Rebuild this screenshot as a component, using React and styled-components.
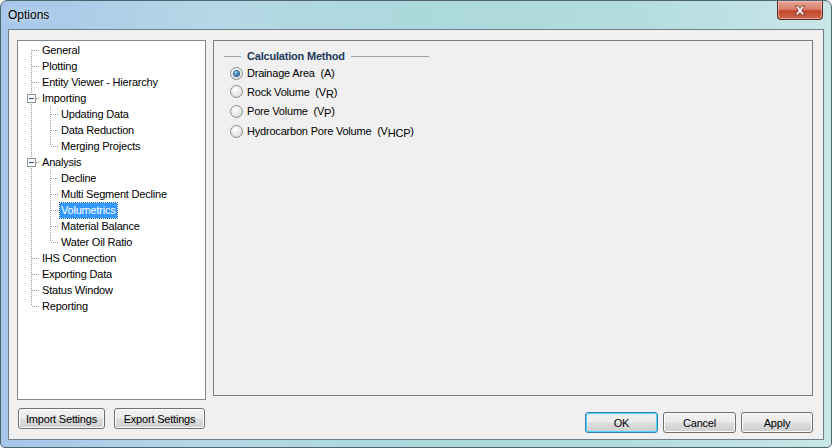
import React from 'react';
import styled, { createGlobalStyle } from 'styled-components';

const GlobalStyle = createGlobalStyle`
    body {
        margin: 0;
        font-family: Tahoma, 'Liberation Sans', sans-serif;
        font-size: 11px;
        letter-spacing: -0.2px;
        color: #000;
    }
`;

const Window = styled.div`
    width: 832px;
    height: 448px;
    box-sizing: border-box;
    display: flex;
    flex-direction: column;
    border: 1px solid #4f6470;
    border-radius: 7px 7px 5px 5px;
    background: linear-gradient(90deg, #a6c6ea 0%, #b5d8e6 25%, #acd9dc 50%, #b2dcde 75%, #c9e6e8 100%);
    overflow: hidden;
`;

const TitleBar = styled.div`
    height: 28px;
    display: flex;
    align-items: flex-start;
    justify-content: space-between;
    padding-left: 7px;
`;

const Title = styled.span`
    margin-top: 7px;
    font-size: 12px;
    letter-spacing: 0;
    color: #000;
    text-shadow: 0 0 6px rgba(255, 255, 255, 0.9);
`;

const CloseButton = styled.div`
    width: 46px;
    height: 19px;
    margin-right: 8px;
    box-sizing: border-box;
    border: 1px solid #5e2b25;
    border-top: none;
    border-radius: 0 0 4px 4px;
    background: linear-gradient(180deg, #e8a598 0%, #d9826e 45%, #c0452c 55%, #d26a4e 100%);
    box-shadow: inset 0 0 0 1px rgba(255, 220, 210, 0.5);
    display: flex;
    align-items: center;
    justify-content: center;
`;

const Client = styled.div`
    flex: 1;
    margin: 0 7px 7px 7px;
    border: 1px solid #6f7f8c;
    background: #f0f0f0;
    display: flex;
    flex-direction: column;
    padding: 10px 10px 0 8px;
`;

const MainRow = styled.div`
    display: flex;
    gap: 7px;
    align-items: flex-start;
`;

const Tree = styled.div`
    width: 189px;
    height: 360px;
    box-sizing: border-box;
    border: 1px solid #828790;
    background: #fff;
    padding-top: 1px;
`;

const TreeRow = styled.div`
    height: 16px;
    display: flex;
    align-items: center;
    position: relative;
    padding-left: ${p => (p.$level === 1 ? 42 : 23)}px;
`;

const Guide = styled.svg`
    position: absolute;
    left: 0;
    top: 0;
    width: 60px;
    height: 16px;
`;

const ItemLabel = styled.span`
    padding: 1px 1px;
    line-height: 13px;
    white-space: nowrap;
    background: ${p => (p.$selected ? '#3399ff' : 'transparent')};
    color: ${p => (p.$selected ? '#fff' : '#000')};
    outline: ${p => (p.$selected ? '1px dotted #1a60b0' : 'none')};
`;

const Panel = styled.div`
    width: 600px;
    height: 356px;
    box-sizing: border-box;
    border: 1px solid #7d7d7d;
    padding: 8px 0 0 10px;
`;

const GroupHeader = styled.div`
    width: 205px;
    display: flex;
    align-items: center;
    gap: 6px;
    height: 14px;
`;

const HeaderLine = styled.div`
    height: 1px;
    background: #a0a0a0;
    width: ${p => p.$w}px;
    flex: ${p => (p.$grow ? 1 : 'none')};
`;

const HeaderText = styled.span`
    font-weight: bold;
    color: #1e395b;
`;

const RadioList = styled.div`
    display: flex;
    flex-direction: column;
    margin-top: 1px;
    padding-left: 6px;
`;

const RadioRow = styled.label`
    display: flex;
    align-items: center;
    height: ${p => p.$h}px;
    gap: 4px;
`;

const RadioDot = styled.span`
    width: 13px;
    height: 13px;
    box-sizing: border-box;
    border-radius: 50%;
    border: 1px solid #8e8f8f;
    background: radial-gradient(circle at 40% 35%, #ffffff 0%, #e6e6e6 55%, #cfcfcf 100%);
    display: flex;
    align-items: center;
    justify-content: center;
    &::after {
        content: '';
        width: 5px;
        height: 5px;
        border-radius: 50%;
        display: ${p => (p.$checked ? 'block' : 'none')};
        background: radial-gradient(circle at 40% 35%, #a4d4f4 0%, #2a6fb5 60%, #174a82 100%);
        box-shadow: 0 0 0 1px #3c6a99;
    }
`;

const RadioText = styled.span`
    white-space: pre;
`;

const Sub = styled.span`
    position: relative;
    top: 2px;
`;

const BottomRow = styled.div`
    display: flex;
    justify-content: space-between;
    align-items: flex-start;
    padding-top: 7px;
`;

const ButtonGroup = styled.div`
    display: flex;
    gap: ${p => p.$gap}px;
    margin-top: ${p => p.$top || 0}px;
    margin-left: ${p => p.$left || 0}px;
`;

const Button = styled.button`
    width: ${p => p.$w}px;
    height: ${p => p.$h}px;
    font-family: Tahoma, 'Liberation Sans', sans-serif;
    font-size: 11px;
    letter-spacing: -0.2px;
    color: #000;
    border: 1px solid ${p => (p.$default ? '#3c7fb1' : '#707070')};
    border-radius: 3px;
    padding: 0;
    background: linear-gradient(180deg, #f2f2f2 0%, #ebebeb 48%, #dddddd 52%, #cfcfcf 100%);
    box-shadow: inset 0 0 0 1px ${p => (p.$default ? '#48d7fb' : '#fcfcfc')};
`;

const treeItems = [
    { label: 'General', level: 0 },
    { label: 'Plotting', level: 0 },
    { label: 'Entity Viewer - Hierarchy', level: 0 },
    { label: 'Importing', level: 0, expander: true },
    { label: 'Updating Data', level: 1 },
    { label: 'Data Reduction', level: 1 },
    { label: 'Merging Projects', level: 1, lastChild: true },
    { label: 'Analysis', level: 0, expander: true },
    { label: 'Decline', level: 1 },
    { label: 'Multi Segment Decline', level: 1 },
    { label: 'Volumetrics', level: 1, selected: true },
    { label: 'Material Balance', level: 1 },
    { label: 'Water Oil Ratio', level: 1, lastChild: true },
    { label: 'IHS Connection', level: 0 },
    { label: 'Exporting Data', level: 0 },
    { label: 'Status Window', level: 0 },
    { label: 'Reporting', level: 0, last: true },
];

function Guides({ item, first }) {
    const dot = { stroke: '#a0a0a0', strokeWidth: 1, strokeDasharray: '1 1', shapeRendering: 'crispEdges' };
    return (
        <Guide>
            <line x1="13.5" y1={first ? 8 : 0} x2="13.5" y2={item.last ? 8 : 16} {...dot} />
            {item.level === 0 && !item.expander && <line x1="14" y1="8.5" x2="22" y2="8.5" {...dot} />}
            {item.expander && (
                <g>
                    <line x1="18" y1="8.5" x2="22" y2="8.5" {...dot} />
                    <rect x="9.5" y="4.5" width="8" height="8" fill="#fff" stroke="#919191" shapeRendering="crispEdges" />
                    <line x1="11" y1="8.5" x2="16" y2="8.5" stroke="#1c4c8c" shapeRendering="crispEdges" />
                </g>
            )}
            {item.level === 1 && (
                <g>
                    <line x1="32.5" y1="0" x2="32.5" y2={item.lastChild ? 8 : 16} {...dot} />
                    <line x1="33" y1="8.5" x2="41" y2="8.5" {...dot} />
                </g>
            )}
        </Guide>
    );
}

const radios = [
    { label: 'Drainage Area  (A)', checked: true, h: 18 },
    { label: 'Rock Volume  (V', sub: 'R', h: 19 },
    { label: 'Pore Volume  (V', sub: 'P', h: 20 },
    { label: 'Hydrocarbon Pore Volume  (V', sub: 'HCP', h: 20 },
];

export default function App() {
    return (
        <>
            <GlobalStyle />
            <Window>
                <TitleBar>
                    <Title>Options</Title>
                    <CloseButton>
                        <svg width="14" height="11" viewBox="0 0 14 11">
                            <path d="M2 1 L5 1 L7 3.5 L9 1 L12 1 L8.6 5.5 L12 10 L9 10 L7 7.5 L5 10 L2 10 L5.4 5.5 Z"
                                fill="#fff" stroke="#6a2a20" strokeWidth="0.8" />
                        </svg>
                    </CloseButton>
                </TitleBar>
                <Client>
                    <MainRow>
                        <Tree>
                            {treeItems.map((item, i) => (
                                <TreeRow key={item.label} $level={item.level}>
                                    <Guides item={item} first={i === 0} />
                                    <ItemLabel $selected={item.selected}>{item.label}</ItemLabel>
                                </TreeRow>
                            ))}
                        </Tree>
                        <Panel>
                            <GroupHeader>
                                <HeaderLine $w={17} />
                                <HeaderText>Calculation Method</HeaderText>
                                <HeaderLine $grow />
                            </GroupHeader>
                            <RadioList>
                                {radios.map(r => (
                                    <RadioRow key={r.label} $h={r.h}>
                                        <RadioDot $checked={r.checked} />
                                        <RadioText>
                                            {r.label}
                                            {r.sub && <Sub>{r.sub}</Sub>}
                                            {r.sub && ')'}
                                        </RadioText>
                                    </RadioRow>
                                ))}
                            </RadioList>
                        </Panel>
                    </MainRow>
                    <BottomRow>
                        <ButtonGroup $gap={9} $top={1} $left={1}>
                            <Button $w={87} $h={21}>Import Settings</Button>
                            <Button $w={91} $h={21}>Export Settings</Button>
                        </ButtonGroup>
                        <ButtonGroup $gap={5} $top={5}>
                            <Button $w={73} $h={21} $default>OK</Button>
                            <Button $w={73} $h={21}>Cancel</Button>
                            <Button $w={72} $h={21}>Apply</Button>
                        </ButtonGroup>
                    </BottomRow>
                </Client>
            </Window>
        </>
    );
}
